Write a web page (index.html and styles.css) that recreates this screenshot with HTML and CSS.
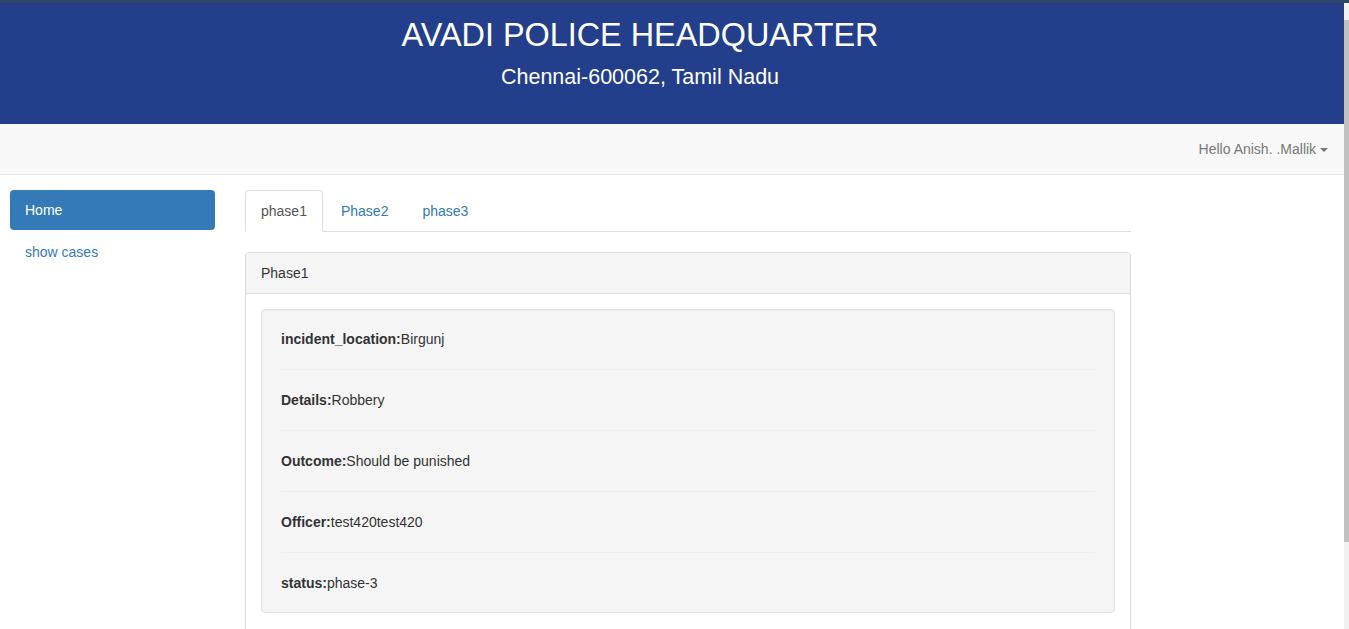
FILE: index.html
```html
<!DOCTYPE html>
<html lang="en">
<head>
<meta charset="utf-8">
<title>Avadi Police Headquarter</title>
<link rel="stylesheet" href="styles.css">
</head>
<body>
<div class="topbar"></div>
<header class="banner">
  <h1 class="banner-title">AVADI POLICE HEADQUARTER</h1>
  <h2 class="banner-sub">Chennai-600062, Tamil Nadu</h2>
</header>
<nav class="navbar">
  <a class="user-menu" href="#">Hello Anish. .Mallik <span class="caret"></span></a>
</nav>
<div class="layout">
  <aside class="sidebar">
    <ul class="pills">
      <li class="pill active"><a href="#">Home</a></li>
      <li class="pill"><a href="#">show cases</a></li>
    </ul>
  </aside>
  <main class="main">
    <ul class="tabs">
      <li class="tab active"><a href="#">phase1</a></li>
      <li class="tab"><a href="#">Phase2</a></li>
      <li class="tab"><a href="#">phase3</a></li>
    </ul>
    <section class="panel">
      <div class="panel-heading">Phase1</div>
      <div class="panel-body">
        <div class="well">
          <div class="field"><b>incident_location:</b>Birgunj</div>
          <hr class="sep">
          <div class="field"><b>Details:</b>Robbery</div>
          <hr class="sep">
          <div class="field"><b>Outcome:</b>Should be punished</div>
          <hr class="sep">
          <div class="field"><b>Officer:</b>test420test420</div>
          <hr class="sep">
          <div class="field"><b>status:</b>phase-3</div>
        </div>
      </div>
    </section>
  </main>
</div>
<div class="scrollbar"><div class="scroll-thumb"></div></div>
</body>
</html>
```

FILE: styles.css
```css
html { background: #fff; }
html::-webkit-scrollbar { width: 0; height: 0; }
body {
  margin: 0;
  font-family: "Liberation Sans", Arial, Helvetica, sans-serif;
  font-size: 14px;
  line-height: 20px;
  color: #333;
  background: #fff;
  padding-bottom: 52px;
}

a { text-decoration: none; }

.topbar { height: 3px; background: #2c4868; }

.banner {
  background: #233e8b;
  color: #fff;
  height: 121px;
  box-sizing: border-box;
  padding: 14px 69px 0 0;
  text-align: center;
}
.banner-title {
  margin: 0;
  font-size: 32.4px;
  line-height: 36px;
  font-weight: normal;
}
.banner-sub {
  margin: 12px 0 0;
  font-size: 21.5px;
  line-height: 24px;
  font-weight: normal;
}

.navbar {
  height: 50px;
  background: #f8f8f8;
  border-bottom: 1px solid #e7e7e7;
  display: flex;
  justify-content: flex-end;
  align-items: center;
  padding-right: 21px;
}
.user-menu { color: #777; line-height: 20px; }
.caret {
  display: inline-block;
  width: 0;
  height: 0;
  vertical-align: middle;
  border-top: 4px solid #777;
  border-left: 4px solid transparent;
  border-right: 4px solid transparent;
}

.layout {
  display: flex;
  align-items: flex-start;
  padding: 15px 0 0 10px;
}
.sidebar { width: 205px; flex: none; }
.pills { list-style: none; margin: 0; padding: 0; display: flex; flex-direction: column; gap: 2px; }
.pill a {
  display: block;
  padding: 10px 15px;
  border-radius: 4px;
  color: #337ab7;
}
.pill.active a { background: #337ab7; color: #fff; }

.main { width: 886px; flex: none; margin-left: 30px; }

.tabs {
  list-style: none;
  margin: 0;
  padding: 0;
  display: flex;
  border-bottom: 1px solid #ddd;
}
.tab { margin-bottom: -1px; margin-right: 2px; }
.tab a {
  display: block;
  padding: 10px 15px;
  border: 1px solid transparent;
  border-radius: 4px 4px 0 0;
  color: #337ab7;
}
.tab.active a {
  color: #555;
  background: #fff;
  border-color: #ddd #ddd transparent;
}

.panel {
  margin: 20px 0 20px;
  border: 1px solid #ddd;
  border-radius: 4px;
  box-shadow: 0 1px 1px rgba(0,0,0,.05);
  background: #fff;
}
.panel-heading {
  padding: 10px 15px;
  background: #f5f5f5;
  border-bottom: 1px solid #ddd;
  border-radius: 3px 3px 0 0;
}
.panel-body { padding: 15px; }
.well {
  padding: 19px;
  background: #f5f5f5;
  border: 1px solid #e3e3e3;
  border-radius: 4px;
  box-shadow: inset 0 1px 1px rgba(0,0,0,.05);
  margin-bottom: 20px;
}
.field b { font-weight: bold; }
.sep {
  margin: 20px 0;
  border: 0;
  border-top: 1px solid #eee;
}

/* window scrollbar drawn over the right edge */
.scrollbar {
  position: fixed;
  top: 3px;
  right: 0;
  bottom: 0;
  width: 5px;
  background: #f1f1f1;
  padding-top: 17px;
  box-sizing: border-box;
}
.scroll-thumb {
  height: 522px;
  background: #c1c1c1;
}
```
